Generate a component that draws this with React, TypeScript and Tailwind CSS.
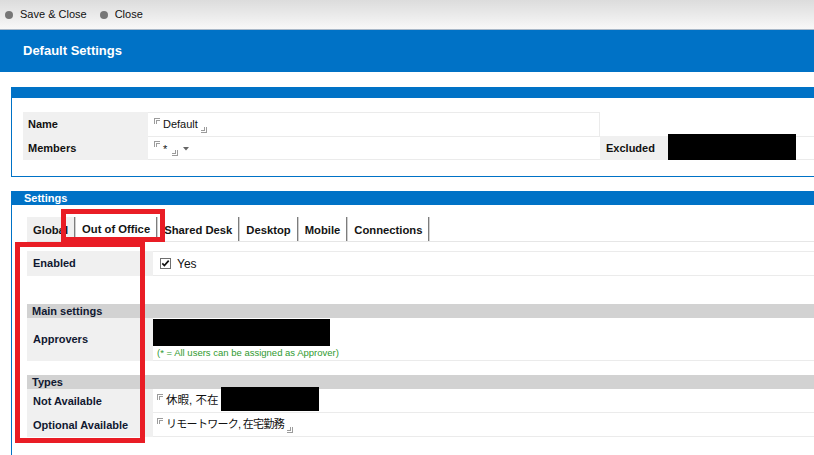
import React from 'react';

function Open() {
  return <span className="inline-block w-[6px] h-[6px] border-l-[3px] border-t-[3px] border-double border-[#9c9c9c] self-start mt-[-1px] mr-[3px]" />;
}

function Close() {
  return <span className="inline-block w-[6px] h-[6px] border-r-[3px] border-b-[3px] border-double border-[#9c9c9c] self-end mb-[-2px] ml-[3px]" />;
}

function Quoted({ children }: { children: React.ReactNode }) {
  return (
    <span className="inline-flex h-[12px] items-center leading-none">
      <Open />
      {children}
    </span>
  );
}

function Tab({ label, active, gray }: { label: string; active?: boolean; gray?: boolean }) {
  return (
    <div
      className={`flex items-center px-[6px] mt-[-1px] text-[11.25px] font-bold text-[#141414] border-r border-[#7d7d7d] shadow-[1px_0_0_#cfcfcf] mr-px ${
        gray ? 'bg-[#f0f0f0]' : 'bg-white'
      } ${active ? 'pt-[1px]' : 'pt-[2px]'}`}
    >
      {label}
    </div>
  );
}

function GroupBar({ title }: { title: string }) {
  return (
    <div className="h-[14px] bg-[#d2d2d2] pl-[5px] text-[11px] font-bold leading-[14px] text-[#101830]">{title}</div>
  );
}

function Row({
  label,
  h,
  top,
  children,
}: {
  label: string;
  h: string;
  top?: boolean;
  children?: React.ReactNode;
}) {
  return (
    <div className={`flex ${h}`}>
      <div className="w-[126px] bg-[#f0f0f0] pl-[6px] flex items-center text-[11px] font-bold text-[#101830]">{label}</div>
      <div className={`flex-1 border-b border-[#ebebeb] pl-[4px] flex items-center ${top ? 'border-t' : ''}`}>
        {children}
      </div>
    </div>
  );
}

export default function App() {
  return (
    <div className="relative w-[814px] h-[455px] overflow-hidden bg-white font-['Liberation_Sans',Arial,'Noto_Sans_CJK_JP',sans-serif] text-[#111]">
      {/* toolbar */}
      <div className="h-[30px] flex items-center pl-[5px] bg-gradient-to-b from-[#dcdcdc] to-[#f8f8f8] border-b border-[#a9b8c8] text-[11px]">
        <span className="w-[8px] h-[8px] rounded-full bg-[#777]" />
        <span className="ml-[7px]">Save &amp; Close</span>
        <span className="ml-[13px] w-[8px] h-[8px] rounded-full bg-[#777]" />
        <span className="ml-[7px]">Close</span>
      </div>

      {/* title */}
      <div className="h-[42px] bg-[#0072c6] flex items-center pl-[23px] text-[13px] font-bold text-white">Default Settings</div>

      {/* section 1 */}
      <div className="mt-[15px] ml-[11px] border-l border-b border-[#0072c6]">
        <div className="h-[11px] bg-[#0072c6]" />
        <div className="pt-[14px] pb-[16px] pl-[11px]">
          <div className="flex h-[24px]">
            <div className="w-[125px] bg-[#f0f0f0] pl-[5px] flex items-center text-[11px] font-bold">Name</div>
            <div className="w-[452px] border-t border-r border-[#ebebeb] pl-[6px] flex items-center text-[11px]">
              <Quoted>
                Default
                <Close />
              </Quoted>
            </div>
          </div>
          <div className="flex h-[24px]">
            <div className="w-[125px] bg-[#f0f0f0] pl-[5px] flex items-center text-[11px] font-bold">Members</div>
            <div className="w-[452px] border-t border-b border-[#ebebeb] pl-[6px] flex items-center text-[11px]">
              <Quoted>
                <span className="mt-[2px]">*</span>
                <span className="ml-[2px]" />
                <Close />
              </Quoted>
              <svg width="6" height="4" viewBox="0 0 6 4" className="ml-[5px] mt-[2px]">
                <path d="M0 0 H6 L3 3.5 Z" fill="#666" />
              </svg>
            </div>
            <div className="w-[68px] bg-[#f0f0f0] pl-[6px] flex items-center text-[11px] font-bold">Excluded</div>
            <div className="w-[128px] h-[26px] mt-[-2px] bg-black" />
            <div className="flex-1 border-t border-b border-[#ebebeb]" />
          </div>
        </div>
      </div>

      {/* section 2 */}
      <div className="mt-[14px] ml-[11px] border-l border-[#0072c6] h-[300px]">
        <div className="h-[14px] bg-[#0072c6] pl-[12px] text-[11px] font-bold leading-[14px] text-white">Settings</div>
        <div className="pl-[15px] pt-[13px]">
          <div className="flex h-[24px] border-b border-[#e6e6e6]">
            <Tab label="Global" gray />
            <Tab label="Out of Office" active />
            <Tab label="Shared Desk" />
            <Tab label="Desktop" />
            <Tab label="Mobile" />
            <Tab label="Connections" />
          </div>

          <div className="mt-[9px]">
            <Row label="Enabled" h="h-[25px]" top>
              <span className="ml-[3px] flex items-center">
                <svg width="11" height="11" viewBox="0 0 11 11">
                  <rect x="0.5" y="0.5" width="10" height="10" fill="#fff" stroke="#6f6f6f" />
                  <path d="M2.3 5.4 L4.4 7.6 L8.7 2.6" stroke="#111" strokeWidth="1.7" fill="none" />
                </svg>
                <span className="ml-[6px] text-[12px]">Yes</span>
              </span>
            </Row>
          </div>

          <div className="mt-[28px]">
            <GroupBar title="Main settings" />
            <div className="flex h-[43px]">
              <div className="w-[126px] bg-[#f0f0f0] pl-[6px] flex items-center text-[11px] font-bold text-[#101830]">Approvers</div>
              <div className="flex-1 border-b border-[#ebebeb] flex flex-col">
                <div className="w-[177px] h-[27px] mt-[1px] bg-black" />
                <div className="pl-[4px] mt-[1px] text-[9.5px] leading-[12px] text-[#2f9a2f]">
                  (* = All users can be assigned as Approver)
                </div>
              </div>
            </div>
          </div>

          <div className="mt-[14px]">
            <GroupBar title="Types" />
            <Row label="Not Available" h="h-[24px]">
              <span className="inline-flex h-[12px] items-center text-[11.5px] leading-none font-['Liberation_Sans','Noto_Sans_CJK_JP',sans-serif]">
                <Open />
                休暇, 不在
              </span>
              <div className="w-[98px] h-[24px] mt-[-4px] ml-[3px] bg-black" />
            </Row>
            <Row label="Optional Available" h="h-[24px]">
              <span className="inline-flex h-[12px] items-center text-[11px] leading-none font-['Liberation_Sans','Noto_Sans_CJK_JP',sans-serif] tracking-[-0.7px]">
                <Open />
                リモートワーク, 在宅勤務
                <Close />
              </span>
            </Row>
          </div>
        </div>
      </div>

      {/* annotation boxes */}
      <div className="absolute left-[61px] top-[209px] w-[104px] h-[33px] border-[5px] border-[#e91d25]" />
      <div className="absolute left-[15px] top-[242px] w-[130px] h-[201px] border-[5px] border-[#e91d25]" />
    </div>
  );
}
